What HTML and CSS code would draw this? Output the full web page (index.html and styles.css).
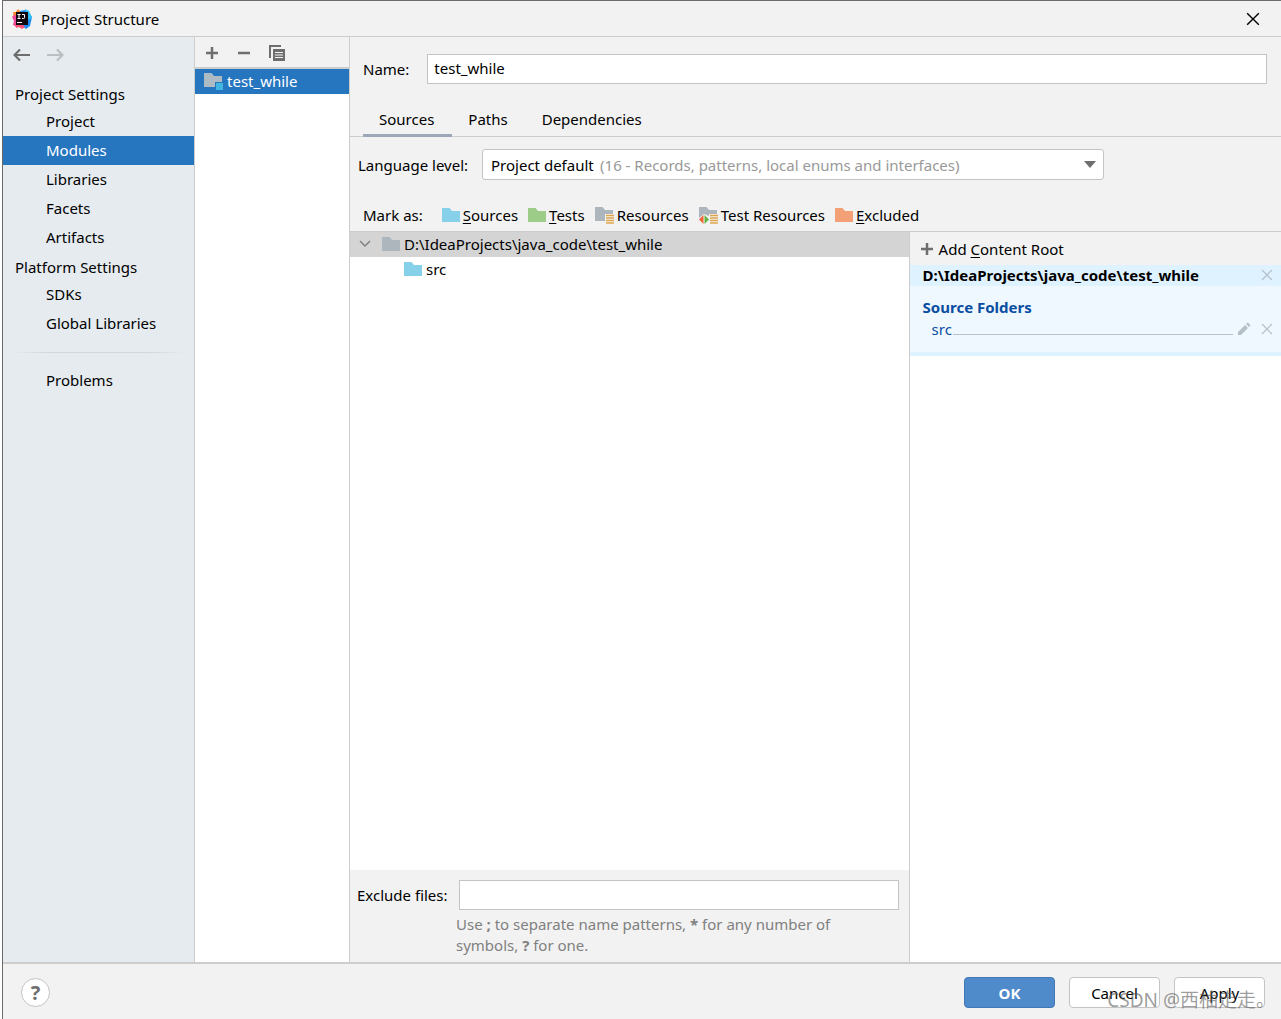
FILE: index.html
```html
<!DOCTYPE html>
<html lang="en">
<head>
<meta charset="utf-8">
<title>Project Structure</title>
<link rel="stylesheet" href="styles.css">
</head>
<body>
<svg class="sprite" aria-hidden="true">
  <symbol id="folder" viewBox="0 0 18 14"><path d="M0 0h7.500l2.500 3h8v11H0z" fill="currentColor"/></symbol>
  <symbol id="plus" viewBox="0 0 14 14"><path d="M7 1v12M1 7h12" stroke="currentColor" stroke-width="2.500"/></symbol>
  <symbol id="cross" viewBox="0 0 12 12"><path d="M1 1l10 10M11 1L1 11" stroke="currentColor" stroke-width="1.200"/></symbol>
</svg>
<div class="window">
  <header class="titlebar">
    <svg class="logo" viewBox="0 0 20 20">
      <path d="M1 3l3 0 2-3 3 3 1 5-8 3z" fill="#fc8a2f"/>
      <path d="M0 8l2-2 5 1v9l-2 2-4-2 1-4z" fill="#f0489a"/>
      <path d="M8 2l5-1 3 1 4 6-2 9-4 3-5-4z" fill="#1c8cf4"/>
      <path d="M13 0l4 2 3 7-4 2z" fill="#2ec0f8"/>
      <path d="M3 14l8 2 2 2-3 2-3-2-3 1z" fill="#fb4f74"/>
      <path d="M4 3h12v13H4z" fill="#100810"/>
      <path d="M5.500 5.500h3M7 5.500v4M5.500 9.500h3M10 5.500h2.500v3.200q0 .8-1 .8H10" fill="none" stroke="#fff"/>
      <path d="M5 13.500h5" stroke="#fff"/>
    </svg>
    <h1 class="title">Project Structure</h1>
    <button class="icon-button close" aria-label="Close"><svg width="14" height="14"><use href="#cross"/></svg></button>
  </header>
  <div class="content">
    <nav class="sidebar">
      <div class="history">
        <button class="icon-button" aria-label="Back"><svg width="18" height="14" viewBox="0 0 18 14"><path d="M17 7H2M7 1.500L1.500 7 7 12.500" fill="none" stroke="#6e6e6e" stroke-width="2.200"/></svg></button>
        <button class="icon-button" aria-label="Forward" disabled><svg width="18" height="14" viewBox="0 0 18 14"><path d="M1 7h15M11 1.500L16.500 7 11 12.500" fill="none" stroke="#bcbfc1" stroke-width="2.200"/></svg></button>
      </div>
      <h2 class="group">Project Settings</h2>
      <a class="nav-item" href="#project">Project</a>
      <a class="nav-item selected" href="#modules" aria-current="page">Modules</a>
      <a class="nav-item" href="#libraries">Libraries</a>
      <a class="nav-item" href="#facets">Facets</a>
      <a class="nav-item" href="#artifacts">Artifacts</a>
      <h2 class="group">Platform Settings</h2>
      <a class="nav-item" href="#sdks">SDKs</a>
      <a class="nav-item" href="#global">Global Libraries</a>
      <hr class="divider">
      <a class="nav-item" href="#problems">Problems</a>
    </nav>
    <section class="modules" aria-label="Modules">
      <div class="toolbar">
        <button class="icon-button" aria-label="Add"><svg width="14" height="14"><use href="#plus"/></svg></button>
        <button class="icon-button" aria-label="Remove"><svg width="14" height="14" viewBox="0 0 14 14"><path d="M1 7h12" stroke="currentColor" stroke-width="2.500"/></svg></button>
        <button class="icon-button" aria-label="Copy"><svg width="16" height="16" viewBox="0 0 16 16"><path d="M1 13V1h11" fill="none" stroke="currentColor" stroke-width="2"/><path d="M4 4h12v12H4z" fill="currentColor"/><path d="M6 7.500h8M6 10h8M6 12.500h8" stroke="#f2f2f2"/></svg></button>
      </div>
      <a class="module" href="#test_while">
        <svg width="19" height="18" viewBox="0 0 19 18"><path d="M0 1h7.500l2.500 3h8v11H0z" fill="#afbbc4"/><path d="M11 10h8v8h-8z" fill="#2675bf"/><path d="M12 11h7v7h-7z" fill="#40b6e0"/></svg>
        test_while
      </a>
    </section>
    <main class="editor">
      <div class="name-row">
        <label for="name">Name:</label>
        <input class="field" id="name" type="text" value="test_while">
      </div>
      <div class="tabs" role="tablist">
        <button class="tab active" role="tab" aria-selected="true">Sources</button>
        <button class="tab" role="tab">Paths</button>
        <button class="tab" role="tab">Dependencies</button>
      </div>
      <div class="level-row">
        <label for="level">Language level:</label>
        <div class="combo">
          <select class="level" id="level"><option>Project default</option></select>
          <span class="level-hint">(16 - Records, patterns, local enums and interfaces)</span>
          <svg class="caret" width="12" height="7" viewBox="0 0 12 7"><path d="M0 0h12L6 7z" fill="#6e6e6e"/></svg>
        </div>
      </div>
      <div class="mark-row">
        <span class="mark-label">Mark as:</span>
        <button class="mark"><svg class="blue" width="18" height="14"><use href="#folder"/></svg><span><u>S</u>ources</span></button>
        <button class="mark"><svg class="green" width="18" height="14"><use href="#folder"/></svg><span><u>T</u>ests</span></button>
        <button class="mark"><svg class="gray" width="19" height="18" viewBox="0 0 19 18"><path d="M0 1h7.500l2.500 3h8v4h-8v7H0z" fill="currentColor"/><path d="M11 9.500h8M11 12h8M11 14.500h8M11 17h8" stroke="#dfa54c" stroke-width="1.300"/></svg><span>Resources</span></button>
        <button class="mark"><svg class="gray" width="19" height="18" viewBox="0 0 19 18"><path d="M0 1h7.500l2.500 3h8v4h-8v2L5 8l-5 4z" fill="currentColor"/><path d="M4.500 9v9L0 13.500z" fill="#f26536"/><path d="M5.500 9v9l4.500-4.500z" fill="#62b543"/><path d="M11 9.500h8M11 12h8M11 14.500h8M11 17h8" stroke="#dfa54c" stroke-width="1.300"/></svg><span>Test Resources</span></button>
        <button class="mark"><svg class="orange" width="18" height="14"><use href="#folder"/></svg><span><u>E</u>xcluded</span></button>
      </div>
      <div class="split">
        <div class="tree-pane">
          <div class="tree" role="tree">
            <div class="tree-row root" role="treeitem" aria-expanded="true">
              <svg width="12" height="8" viewBox="0 0 12 8"><path d="M1 1l5 5 5-5" fill="none" stroke="#808080" stroke-width="1.500"/></svg>
              <svg class="folder gray" width="18" height="14"><use href="#folder"/></svg>
              <span>D:\IdeaProjects\java_code\test_while</span>
            </div>
            <div class="tree-row child" role="treeitem">
              <svg class="folder blue" width="18" height="14"><use href="#folder"/></svg>
              <span>src</span>
            </div>
          </div>
          <div class="exclude">
            <label for="exclude">Exclude files:</label>
            <input class="field" id="exclude" type="text">
            <p class="help">Use <b>;</b> to separate name patterns, <b>*</b> for any number of symbols, <b>?</b> for one.</p>
          </div>
        </div>
        <aside class="roots">
          <button class="add-root"><svg class="add-icon" width="14" height="14"><use href="#plus"/></svg><span>Add <u>C</u>ontent Root</span></button>
          <div class="root-head">
            <span>D:\IdeaProjects\java_code\test_while</span>
            <button class="icon-button pale" aria-label="Remove content root"><svg width="12" height="12"><use href="#cross"/></svg></button>
          </div>
          <div class="root-body">
            <h3 class="folders-title">Source Folders</h3>
            <div class="source">
              <a class="source-link" href="#src">src</a>
              <span class="leader"></span>
              <button class="icon-button pale" aria-label="Edit"><svg width="14" height="14" viewBox="0 0 14 14"><path d="M1 13v-3l7-7 3 3-7 7zM9 2l1.500-1.500q1 0 3 3L12 5z" fill="currentColor"/></svg></button>
              <button class="icon-button pale" aria-label="Remove source folder"><svg width="12" height="12"><use href="#cross"/></svg></button>
            </div>
          </div>
        </aside>
      </div>
    </main>
  </div>
  <footer class="footer">
    <button class="help-button" aria-label="Help">?</button>
    <button class="button primary">OK</button>
    <button class="button">Cancel</button>
    <button class="button">Apply</button>
    <span class="watermark">CSDN @西柚走走。</span>
  </footer>
</div>
</body>
</html>
```
FILE: styles.css
```css
* { box-sizing: border-box; }
body {
  margin: 0;
  padding-left: 2px;
  background: #fff;
  color: #000;
  font: 15px/20px "Noto Sans", "Noto Sans CJK SC", sans-serif;
}
button, input, select { font: inherit; color: inherit; }
button { padding: 0; border: 0; background: none; }
a { color: inherit; text-decoration: none; }
h1, h2, h3, p { margin: 0; font-size: inherit; font-weight: 400; }
svg { display: block; flex: none; }
u { text-underline-offset: 2px; }
.sprite { display: none; }
.icon-button { display: flex; color: #6e6e6e; }
.window {
  display: flex;
  flex-direction: column;
  min-height: 100vh;
  border-top: 1px solid #6b6b6b;
  border-left: 1px solid #6b6b6b;
  background: #f2f2f2;
}
.titlebar {
  display: flex;
  align-items: center;
  gap: 9px;
  height: 36px;
  padding: 0 21px 0 9px;
  border-bottom: 1px solid #cdcdcd;
}
.logo { width: 20px; height: 20px; }
.title { flex: 1; }
.close { color: #000; }
.content { display: flex; flex: 1; }
.sidebar {
  width: 192px;
  flex: none;
  border-right: 1px solid #cdcdcd;
  background: #e6ebef;
}
.history { display: flex; gap: 15px; height: 42px; padding: 11px 10px; }
.group { height: 28px; padding-left: 12px; line-height: 31px; }
.nav-item { display: block; padding-left: 43px; line-height: 29px; }
.selected { background: #2675bf; color: #fff; }
.divider {
  height: 1px;
  margin: 14px 10px 13px;
  border: 0;
  background: linear-gradient(90deg, transparent, #d3d7da 20%, #d3d7da 80%, transparent);
}
.modules {
  width: 155px;
  flex: none;
  border-right: 1px solid #cdcdcd;
  background: #fff;
}
.toolbar {
  display: flex;
  align-items: center;
  gap: 18px;
  height: 32px;
  padding: 2px 10px 0;
  border-bottom: 2px solid #cdcdcd;
  background: #f2f2f2;
}
.module {
  display: flex;
  align-items: center;
  gap: 4px;
  height: 25px;
  padding: 0 0 2px 9px;
  background: #2675bf;
  color: #fff;
}
.editor { display: flex; flex: 1; flex-direction: column; min-width: 0; }
.name-row { display: flex; align-items: center; gap: 18px; padding: 17px 14px 0 13px; }
.field {
  flex: 1;
  min-width: 0;
  height: 30px;
  padding: 0 6px 2px;
  border: 1px solid #c4c4c4;
  background: #fff;
}
.tabs { display: flex; margin-top: 19px; padding-left: 13px; border-bottom: 1px solid #cdcdcd; }
.tab { height: 34px; margin-bottom: -1px; padding: 0 18px 0 16px; border-bottom: 3px solid transparent; }
.active { border-color: #9ca7b8; }
.level-row { display: flex; align-items: center; gap: 14px; padding: 12px 8px 0; }
.combo { display: grid; width: 68%; align-items: center; }
.combo > * { grid-area: 1 / 1; }
.level {
  appearance: none;
  width: 100%;
  height: 31px;
  padding: 0 8px;
  border: 1px solid #c4c4c4;
  border-radius: 3px;
  background: #fff;
}
.level-hint { margin-left: 118px; color: #999; pointer-events: none; }
.caret { justify-self: end; margin-right: 8px; pointer-events: none; }
.mark-row { display: flex; align-items: center; gap: 10px; height: 51px; padding: 18px 13px 0; }
.mark-label { margin-right: 9px; }
.mark { display: flex; align-items: center; gap: 3px; }
.blue { color: #87d0e9; }
.green { color: #9ccc87; }
.gray { color: #adb6bd; }
.orange { color: #f4a077; }
.split { display: flex; flex: 1; border-top: 1px solid #cdcdcd; }
.tree-pane { display: flex; flex: 1; flex-direction: column; min-width: 0; }
.tree { flex: 1; background: #fff; }
.tree-row { display: flex; align-items: center; gap: 4px; height: 25px; padding-bottom: 1px; }
.root { padding-left: 9px; background: #d4d4d4; }
.root .folder { margin-left: 7px; }
.child { padding-left: 54px; }
.exclude {
  display: grid;
  grid-template-columns: auto 1fr;
  align-items: center;
  column-gap: 12px;
  padding: 10px 10px 6px 7px;
}
.help { grid-column: 1 / -1; padding: 4px 48px 0 99px; color: #808080; line-height: 21px; }
.roots { width: 40%; border-left: 1px solid #cdcdcd; background: #fff; }
.add-root { display: flex; align-items: center; gap: 5px; width: 100%; height: 33px; padding-left: 10px; background: #f2f2f2; }
.add-icon { color: #6e6e6e; }
.root-head {
  display: flex;
  align-items: center;
  justify-content: space-between;
  height: 21px;
  padding: 0 8px 1px 13px;
  background: #dff2ff;
  font-weight: 700;
}
.pale { color: #b4bfc7; }
.root-body { height: 70px; padding: 11px 8px 0 13px; border-bottom: 4px solid #dff2ff; background: #f0f8ff; }
.folders-title { color: #0a4ea2; font-weight: 700; }
.source { display: flex; align-items: center; padding: 2px 0 0 9px; gap: 1px; }
.source-link { color: #0a4ea2; }
.leader { flex: 1; height: 12px; border-bottom: 1px solid #b9c3cb; }
.source .pale { margin-left: 3px; }
.source .pale + .pale { margin-left: 9px; }
.footer {
  position: relative;
  display: flex;
  align-items: center;
  gap: 14px;
  height: 57px;
  padding: 2px 16px 0 18px;
  border-top: 2px solid #cdcdcd;
}
.help-button {
  width: 29px;
  height: 29px;
  margin-right: auto;
  border: 1px solid #c4c4c4;
  border-radius: 50%;
  background: #fff;
  color: #6e6e6e;
  font-size: 20px;
  font-weight: 700;
}
.button { width: 91px; height: 31px; border: 1px solid #c4c4c4; border-radius: 4px; background: #fff; }
.primary { border-color: #4278b5; background: #4f8aca; color: #fff; font-weight: 700; }
.watermark {
  position: absolute;
  right: 6px;
  bottom: 5px;
  color: rgba(90, 90, 90, 0.6);
  font-size: 19px;
  line-height: 28px;
  pointer-events: none;
}
```
